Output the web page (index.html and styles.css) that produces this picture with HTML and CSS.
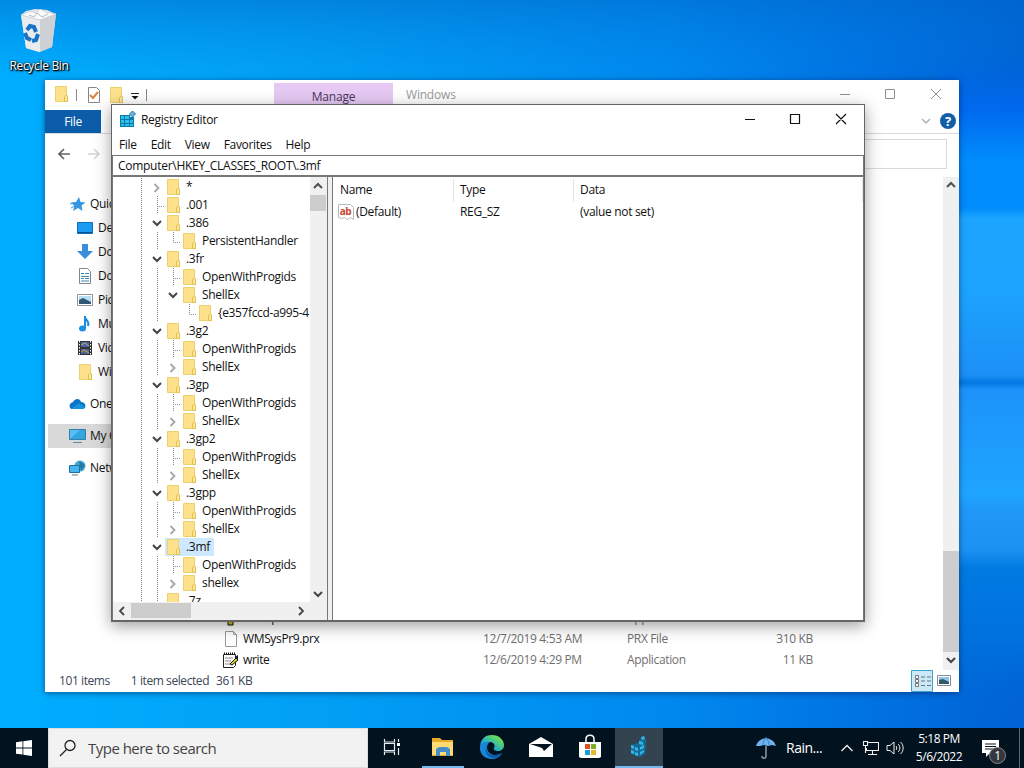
FILE: index.html
```
<!DOCTYPE html>
<html lang="en">
<head>
    <meta charset="UTF-8">
    <meta name="viewport" content="width=device-width, initial-scale=1.0">
    <title>Registry Editor</title>
    <link rel="stylesheet" href="styles.css">
</head>
<body>
    <!-- shared icons -->
    <svg class="defs" width="0" height="0">
        <defs>
            <symbol id="folder" viewBox="-1 0 16 16"><path d="M1.500.5h11v9l1 1v5h-12z" fill="#fde28b" stroke="#ecd06c"/><path d="M10.500 15.500v-5l2-1.500 1 1v5.500z" fill="#fbe79b" stroke="#e3c04c"/></symbol>
            <symbol id="down" viewBox="1 0 16 16"><path d="M5 6l4 4 4-4" fill="none" stroke="#444" stroke-width="2"/></symbol>
            <symbol id="up" viewBox="0 0 16 16"><path d="M4 10l4-4 4 4" fill="none" stroke="#505050" stroke-width="2"/></symbol>
            <symbol id="right" viewBox="1 0 16 16"><path d="M6.500 5l4 4-4 4" fill="none" stroke="#a6a6a6" stroke-width="1.800"/></symbol>
        </defs>
    </svg>

    <div class="desktop">
        <svg class="wallpaper" width="1024" height="728" viewBox="0 0 1024 728">
            <defs>
                <linearGradient id="base" x1="0" y1="0" x2="1" y2="0">
                    <stop offset="0" stop-color="#00aeff"/><stop offset=".3" stop-color="#02a0f5"/>
                    <stop offset=".65" stop-color="#0089ef"/><stop offset=".85" stop-color="#0072e2"/><stop offset="1" stop-color="#0062d4"/>
                </linearGradient>
                <linearGradient id="top" x1="0" y1="0" x2="0" y2="1">
                    <stop offset="0" stop-color="#0068c8" stop-opacity=".5"/><stop offset="1" stop-color="#0080e0" stop-opacity="0"/>
                </linearGradient>
                <linearGradient id="beam" gradientUnits="userSpaceOnUse" x1="0" y1="0" x2="0" y2="728">
                    <stop offset=".08" stop-color="#0066e6" stop-opacity="0"/>
                    <stop offset=".15" stop-color="#0069ee"/>
                    <stop offset=".22" stop-color="#008cfc"/>
                    <stop offset=".285" stop-color="#008cfa"/>
                    <stop offset=".3" stop-color="#1ca5ff"/>
                    <stop offset=".4" stop-color="#1ca3ff"/>
                    <stop offset=".515" stop-color="#1c90f5"/>
                    <stop offset=".526" stop-color="#0078e2"/>
                    <stop offset=".535" stop-color="#1d93fa"/>
                    <stop offset=".68" stop-color="#1ea5ff"/>
                    <stop offset=".7" stop-color="#2098f8"/>
                    <stop offset=".755" stop-color="#1c92f2"/>
                    <stop offset=".78" stop-color="#007be2"/>
                    <stop offset=".88" stop-color="#0071df"/>
                    <stop offset=".98" stop-color="#0068d8" stop-opacity="0"/>
                </linearGradient>
            </defs>
            <rect width="1024" height="728" fill="url(#base)"/>
            <rect width="1024" height="80" fill="url(#top)"/>
            <rect x="940" width="84" height="728" fill="url(#beam)"/>
        </svg>

        <div class="shortcut">
            <svg width="40" height="46" viewBox="0 0 40 46">
                <path d="M2 6l5-4 9-2 12 1 9 4-4 33-13 5-13-4z" fill="#e3e5e8"/>
                <path d="M2 6l19 5v32L7 39z" fill="#e9ebed"/><path d="M21 11l16-6-4 33-12 5z" fill="#cdd1d5"/>
                <path d="M2 6l9-4 6 2 4-4 6 3 10 2-16 6z" fill="#fafafa" stroke="#c4cace" stroke-width=".8"/>
                <path d="M10 6l5 2 3-4 5 4 6-3" fill="none" stroke="#b6bcc0"/>
                <g fill="none" stroke="#1873c4" stroke-width="4"><path d="M8 21l3-4 4 1 2 5"/><path d="M6 24l2 5 4 2"/><path d="M19 25l-2 6-4 1"/></g>
            </svg>
            <span>Recycle Bin</span>
        </div>

        <div class="window explorer">
            <div class="quickbar">
                <svg class="qfolder" width="16" height="16"><use href="#folder"/></svg>
                <span class="divider"></span>
                <svg class="qcheck" width="14" height="17" viewBox="0 0 14 17"><path d="M1.500.5h8l3 3v12h-11z" fill="#fff" stroke="#868686"/><path d="M3 8l3 3 5-6" fill="none" stroke="#d58445" stroke-width="2"/></svg>
                <svg class="qfolder2" width="16" height="16"><use href="#folder"/></svg>
                <svg class="qdown" width="8" height="8" viewBox="0 0 8 8"><path d="M0 .5h8" stroke="#222"/><path d="M.5 3h7L4 6.500z" fill="#111"/></svg>
                <span class="divider last"></span>
                <span class="manage">Manage</span>
                <span class="wintitle">Windows</span>
                <svg class="controls" width="138" height="28" viewBox="0 0 138 28"><path d="M18 13.500h10M63.500 8.500h9v9h-9zM109 8l10 10M119 8l-10 10" fill="none" stroke="#8e8e8e"/></svg>
            </div>
            <div class="ribbon">
                <span class="filetab">File</span>
                <svg width="40" height="22" viewBox="0 0 40 22"><path d="M3 9l4 4 4-4" fill="none" stroke="#b0b0b0" stroke-width="1.500"/><circle cx="29" cy="11" r="8" fill="#125ea8"/><text x="29" y="15.500" text-anchor="middle" class="help">?</text></svg>
            </div>
            <div class="addressrow">
                <svg width="50" height="16" viewBox="0 0 50 16"><path d="M12 7H1M6 2L1 7l5 5" fill="none" stroke="#626262" stroke-width="1.600"/><path d="M30 7h11M36 2l5 5-5 5" fill="none" stroke="#d2d2d2" stroke-width="1.600"/></svg>
                <span class="searchbox"></span>
            </div>
            <div class="exbody">
                <div class="nav">
                    <div class="navrow root"><svg width="16" height="16" viewBox="0 0 16 16"><path d="M9 1l1.500 5 5 .500-4 3 1 5.500-4.500-3L3 15l1.500-5L1 6.500l5-.5z" fill="#3296e0"/><path d="M0 8l4-1M1 12l4-2" stroke="#3296e0"/></svg>Quick access</div>
                    <div class="navrow"><svg width="16" height="16" viewBox="0 0 16 16"><path d="M.5 2.500h15v11H.5z" fill="#1c9bf2" stroke="#0c6ebc"/><path d="M1 12.500h14" stroke="#075391"/></svg>Desktop</div>
                    <div class="navrow"><svg width="16" height="16" viewBox="0 0 16 16"><path d="M5 0h6v7h5l-8 8-8-8h5z" fill="#3c8ddc"/></svg>Downloads</div>
                    <div class="navrow"><svg width="16" height="16" viewBox="0 0 16 16"><path d="M2.500.5h8l3 3v12h-11z" fill="#fff" stroke="#7d8790"/><path d="M4 5.500h3M8 5.500h4M4 8.500h8M4 10.500h3M8 10.500h4M4 13h8" stroke="#3c87b6"/></svg>Documents</div>
                    <div class="navrow"><svg width="16" height="16" viewBox="0 0 16 16"><path d="M.5 2.500h15v11H.5z" fill="#fff" stroke="#8d969d"/><path d="M2 4h12v8H2z" fill="#b8ddf5"/><path d="M2 8l4-2 8 4v2H2z" fill="#2f5975"/></svg>Pictures</div>
                    <div class="navrow"><svg width="16" height="16" viewBox="0 0 16 16"><path d="M8 0v12M8 1c0 3 5 4 3 9" stroke="#158cdf" stroke-width="2" fill="none"/><ellipse cx="5.500" cy="12.500" rx="3.500" ry="3" fill="#1993e6"/></svg>Music</div>
                    <div class="navrow"><svg width="16" height="16" viewBox="0 0 16 16"><path d="M1 1h14v14H1z" fill="#333"/><path d="M2.500 1v14M13.500 1v14" stroke="#fff" stroke-dasharray="1.500 1.500"/><path d="M4 2h8v5H4z" fill="#4269ad"/><path d="M4 9h8v5H4z" fill="#4d6699"/><path d="M4 5l4-2 4 3M4 12l3-2 5 3" stroke="#d5a24d" fill="none"/></svg>Videos</div>
                    <div class="navrow"><svg width="16" height="16"><use href="#folder"/></svg>Windows</div>
                    <div class="navrow root spaced"><svg width="17" height="16" viewBox="0 0 17 16"><path d="M2 13a4 4 0 012-7c2-4 7-4 8 0 5 0 6 6 2 7z" fill="#0a75c5"/><path d="M2 13L10 7l6 4-2 2z" fill="#1693df"/></svg>OneDrive</div>
                    <div class="navrow root spaced selected"><svg width="17" height="16" viewBox="0 0 17 16"><path d="M.5 1.500h16v10H.5z" fill="#59bdf3" stroke="#337fab"/><path d="M1 11L11 2h5v9z" fill="#36a4df"/><path d="M4 14.500h9" stroke="#608ba5"/></svg>My Computer</div>
                    <div class="navrow root spaced"><svg width="17" height="16" viewBox="0 0 17 16"><circle cx="11" cy="6" r="5.500" fill="#44a8ce"/><path d="M10 1l6 4-4 6" fill="#2177a8"/><path d="M.5 5.500h10v7H.5z" fill="#46b6ee" stroke="#21719f"/><path d="M3 15h6" stroke="#547c90"/></svg>Network</div>
                </div>
                <div class="files">
                    <div class="filerow"><svg width="16" height="16" viewBox="0 0 16 16"><path d="M2 1h10v10H2z" fill="#ddd"/><path d="M6 11h5v4H6z" fill="#d2c71a" stroke="#111"/></svg><span>winhlp32</span><span>12/7/2019 4:10 AM</span><span>Application</span><span>12 KB</span></div>
                    <div class="filerow"><svg width="16" height="16" viewBox="0 0 16 16"><path d="M3.500.5h8l3 3v12h-11z" fill="#fff" stroke="#9a9a9a"/><path d="M11.500.5v3h3" fill="none" stroke="#9a9a9a"/></svg><span>WMSysPr9.prx</span><span>12/7/2019 4:53 AM</span><span>PRX File</span><span>310 KB</span></div>
                    <div class="filerow"><svg width="17" height="16" viewBox="0 0 17 16"><path d="M1.500 2.500h12v11l-2 2h-10z" fill="#fff" stroke="#222"/><path d="M2 1.500h12" stroke="#111" stroke-width="2" stroke-dasharray="1 1"/><path d="M3 6h8M3 9h6M3 12h5" stroke="#888"/><path d="M8 12l6-6 2 2-6 5z" fill="#d8d32a" stroke="#111"/><path d="M13 5l3-2v5z" fill="#113"/></svg><span>write</span><span>12/6/2019 4:29 PM</span><span>Application</span><span>11 KB</span></div>
                </div>
                <div class="vscroll exscroll">
                    <svg width="16" height="16"><use href="#up"/></svg>
                    <span class="thumb"></span>
                    <svg width="16" height="16"><use href="#down"/></svg>
                </div>
            </div>
            <div class="status">
                <span>101 items</span><span>1 item selected</span><span>361 KB</span>
                <svg width="44" height="22" viewBox="0 0 44 22"><path d="M.5.5h21v21H.5z" fill="#cbe8f6" stroke="#3da0c8"/><path d="M4.500 5.500h3v3h-3zM4.500 9.500h3v3h-3zM4.500 13.500h3v3h-3z" fill="#fff" stroke="#777"/><path d="M10 7h4M16 7h4M10 11h4M16 11h4M10 15.500h4M16 15.500h4" stroke="#62747e"/><path d="M26.500 5.500h13v10h-13z" fill="#fff" stroke="#858b91"/><path d="M28 7h10v7H28z" fill="#8ec4e8"/><path d="M28 10l4-1 6 3v2H28z" fill="#315a69"/></svg>
            </div>
        </div>

        <div class="window regedit">
            <div class="titlebar">
                <svg width="18" height="18" viewBox="0 0 18 18"><path d="M1 4h10v2h4v10H1z" fill="#087aa9"/><path d="M2 5h3v3H2zM6 5h4v3H6zM2 9h3v3H2zM6 9h4v3H6zM11 9h3v3h-3zM2 13h3v2H2zM6 13h4v2H6zM11 13h3v2h-3z" fill="#31bde7"/><path d="M13.500 0l3 3-3 3-3-3z" fill="#6cb3e2" stroke="#1d77af"/></svg>
                <span>Registry Editor</span>
                <svg class="controls" width="138" height="28" viewBox="0 0 138 28"><path d="M19 13.500h10M64.500 8.500h9v9h-9zM110 8l10 10M120 8l-10 10" fill="none" stroke="#111" stroke-width="1.200"/></svg>
            </div>
            <div class="menubar"><span>File</span><span>Edit</span><span>View</span><span>Favorites</span><span>Help</span></div>
            <div class="address">Computer\HKEY_CLASSES_ROOT\.3mf</div>
            <div class="panes">
                <div class="treepane">
                    <div class="treetop">
                        <div class="tree">
                            <div class="row"><i class="v"></i><svg><use href="#right"/></svg><svg><use href="#folder"/></svg><b>*</b></div>
                            <div class="row"><i class="v"></i><i class="t"></i><svg><use href="#folder"/></svg><b>.001</b></div>
                            <div class="row"><i class="v"></i><svg><use href="#down"/></svg><svg><use href="#folder"/></svg><b>.386</b></div>
                            <div class="row"><i class="v"></i><i class="v"></i><i class="e"></i><svg><use href="#folder"/></svg><b>PersistentHandler</b></div>
                            <div class="row"><i class="v"></i><svg><use href="#down"/></svg><svg><use href="#folder"/></svg><b>.3fr</b></div>
                            <div class="row"><i class="v"></i><i class="v"></i><i class="t"></i><svg><use href="#folder"/></svg><b>OpenWithProgids</b></div>
                            <div class="row"><i class="v"></i><i class="v"></i><svg><use href="#down"/></svg><svg><use href="#folder"/></svg><b>ShellEx</b></div>
                            <div class="row"><i class="v"></i><i class="v"></i><i></i><i class="e"></i><svg><use href="#folder"/></svg><b class="guid">{e357fccd-a995-4</b></div>
                            <div class="row"><i class="v"></i><svg><use href="#down"/></svg><svg><use href="#folder"/></svg><b>.3g2</b></div>
                            <div class="row"><i class="v"></i><i class="v"></i><i class="t"></i><svg><use href="#folder"/></svg><b>OpenWithProgids</b></div>
                            <div class="row"><i class="v"></i><i class="v"></i><svg><use href="#right"/></svg><svg><use href="#folder"/></svg><b>ShellEx</b></div>
                            <div class="row"><i class="v"></i><svg><use href="#down"/></svg><svg><use href="#folder"/></svg><b>.3gp</b></div>
                            <div class="row"><i class="v"></i><i class="v"></i><i class="t"></i><svg><use href="#folder"/></svg><b>OpenWithProgids</b></div>
                            <div class="row"><i class="v"></i><i class="v"></i><svg><use href="#right"/></svg><svg><use href="#folder"/></svg><b>ShellEx</b></div>
                            <div class="row"><i class="v"></i><svg><use href="#down"/></svg><svg><use href="#folder"/></svg><b>.3gp2</b></div>
                            <div class="row"><i class="v"></i><i class="v"></i><i class="t"></i><svg><use href="#folder"/></svg><b>OpenWithProgids</b></div>
                            <div class="row"><i class="v"></i><i class="v"></i><svg><use href="#right"/></svg><svg><use href="#folder"/></svg><b>ShellEx</b></div>
                            <div class="row"><i class="v"></i><svg><use href="#down"/></svg><svg><use href="#folder"/></svg><b>.3gpp</b></div>
                            <div class="row"><i class="v"></i><i class="v"></i><i class="t"></i><svg><use href="#folder"/></svg><b>OpenWithProgids</b></div>
                            <div class="row"><i class="v"></i><i class="v"></i><svg><use href="#right"/></svg><svg><use href="#folder"/></svg><b>ShellEx</b></div>
                            <div class="row current"><i class="v"></i><svg><use href="#down"/></svg><svg><use href="#folder"/></svg><b>.3mf</b></div>
                            <div class="row"><i class="v"></i><i class="v"></i><i class="t"></i><svg><use href="#folder"/></svg><b>OpenWithProgids</b></div>
                            <div class="row"><i class="v"></i><i class="v"></i><svg><use href="#right"/></svg><svg><use href="#folder"/></svg><b>shellex</b></div>
                            <div class="row"><i class="v"></i><i class="t"></i><svg><use href="#folder"/></svg><b>.7z</b></div>
                        </div>
                        <div class="vscroll">
                            <svg width="16" height="16"><use href="#up"/></svg>
                            <span class="thumb"></span>
                            <svg width="16" height="16"><use href="#down"/></svg>
                        </div>
                    </div>
                    <div class="hscroll">
                        <svg width="18" height="16" viewBox="0 0 18 16"><path d="M11 4L7 8l4 4" fill="none" stroke="#444" stroke-width="1.800"/></svg>
                        <span class="hthumb"></span>
                        <svg width="16" height="16" viewBox="0 0 16 16"><path d="M6 4l4 4-4 4" fill="none" stroke="#444" stroke-width="1.800"/></svg>
                    </div>
                </div>
                <div class="values">
                    <div class="vhead"><span>Name</span><span>Type</span><span>Data</span></div>
                    <div class="vrow">
                        <span><svg width="16" height="16" viewBox="0 0 16 16"><path d="M.5.5h12l3 3v12l-3-2-3 2-3-2-3 1-3-1z" fill="#fff" stroke="#b5bab5"/><text x="7.500" y="10.500" text-anchor="middle" class="ab">ab</text></svg>(Default)</span>
                        <span>REG_SZ</span><span>(value not set)</span>
                    </div>
                </div>
            </div>
        </div>
    </div>

    <div class="taskbar">
        <div class="start"><svg width="16" height="16" viewBox="0 0 16 16"><path d="M0 2.300L6.500 1.300v6.200H0zM7.300 1.200L16 0v7.500H7.300zM0 8.400h6.500v6.200L0 13.700zM7.300 8.400H16V16l-8.700-1.200z" fill="#fff"/></svg></div>
        <div class="search"><svg width="18" height="18" viewBox="0 0 18 18"><circle cx="11" cy="6.500" r="5" fill="none" stroke="#222" stroke-width="1.300"/><path d="M7.500 10.500L1 17" stroke="#222" stroke-width="1.300"/></svg>Type here to search</div>
        <div class="apps">
            <div class="app taskview"><svg width="18" height="18" viewBox="0 0 18 18"><path d="M1.500 1v3h10V1M1.500 17v-3h10v3M1.500 5.500h10v7h-10zM15.500 1v3M15.500 10v7" fill="none" stroke="#e9eef2" stroke-width="1.200"/><path d="M14 5h3v3h-3z" fill="#fff"/></svg></div>
            <div class="app open"><svg width="24" height="22" viewBox="0 0 24 22"><path d="M1 2h8l2 2h11v16H1z" fill="#e8aa2c"/><path d="M1 6h21v13H1z" fill="#ffdb72"/><path d="M5 20v-7l3-2h8l3 2v7h-4v-4H9v4z" fill="#458dcb"/></svg></div>
            <div class="app"><svg width="26" height="26" viewBox="0 0 26 26">
                <defs><linearGradient id="edge" x1="0" y1="1" x2="1" y2="0"><stop offset=".3" stop-color="#16a3da"/><stop offset=".8" stop-color="#6bde56"/></linearGradient></defs>
                <path d="M1 12C2 4 7 1 13 1c7 0 12 5 12 10 0 4-3 6-6 6-3 0-5-1-4-3 2-3-1-6-4-6C7 8 3 9 1 12z" fill="url(#edge)"/>
                <path d="M1 12c2-4 7-5 10-4-4 2-5 12 5 13 3 0 5-1 7-2-2 4-6 6-10 6C5 25 0 19 1 12z" fill="#1786d8"/>
                <path d="M11 8c-5 2-6 14 5 13 3 0 5-1 7-2-3 4-6 5-9 5-8-1-10-12-3-16z" fill="#0d59a7"/></svg></div>
            <div class="app"><svg width="26" height="22" viewBox="0 0 26 22"><path d="M1 8l12-7 12 7v13H1z" fill="#fff"/><path d="M2 8h22l-8 7-2-3z" fill="#07141d"/></svg></div>
            <div class="app"><svg width="24" height="26" viewBox="0 0 24 26"><path d="M8 8V5c0-5 8-5 8 0v3" fill="none" stroke="#fff" stroke-width="1.500"/><path d="M1 8h22v15l-2 1H3l-2-1z" fill="#fff"/><path d="M7 10h5v5H7z" fill="#d8512d"/><path d="M13 10h5v5h-5z" fill="#7fad27"/><path d="M7 16h5v5H7z" fill="#189bd6"/><path d="M13 16h5v5h-5z" fill="#e9b72a"/></svg></div>
            <div class="app active"><svg width="22" height="24" viewBox="0 0 22 24"><path d="M3 10l7-2 2-4 4-2 2 3-1 14-5 3-9-3z" fill="#136b96"/><path d="M3 10l3 1v3l-3-1zM7 12l3 1v3l-3-1zM3 15l3 1v3l-3-1zM7 17l3 1v3l-3-1zM12 12l4-2v3l-4 2zM12 17l4-2v2l-4 3zM11 6l4 1v3l-4-1zM13 2l3-1 1 3-3 1z" fill="#35b6e6"/></svg></div>
        </div>
        <div class="tray">
            <svg width="22" height="24" viewBox="0 0 22 24"><path d="M1 10C3 4 7 3 11 2c4 1 8 2 10 8l-4-1-4 1-4-1-4 1z" fill="#6fb2ed"/><path d="M11 1v2M8 9c0-3 1-5 3-7 2 2 3 4 3 7" stroke="#3b82c7" fill="none"/><path d="M11 10v10c0 3-4 3-4 0" fill="none" stroke="#84949e" stroke-width="1.600"/></svg>
            <span class="weather">Rain...</span>
            <svg class="caret" width="14" height="10" viewBox="0 0 14 10"><path d="M1.500 8L7 2.500 12.500 8" fill="none" stroke="#eee" stroke-width="1.300"/></svg>
            <svg class="net" width="17" height="16" viewBox="0 0 17 16"><path d="M5.500 2.500h11v8h-12V8M10.500 11v3M6 14.500h9M1.500 1.500h4v4h-4zM3.500 6v7" fill="none" stroke="#eee" stroke-width="1.100"/></svg>
            <svg class="sound" width="18" height="16" viewBox="0 0 18 16"><path d="M1 5.500h3l4-3.500v12l-4-3.500H1zM10 6c1 1 1 3 0 4M12 4c2.500 2 2.500 6 0 8M14.500 2c3.500 3 3.500 9 0 12" fill="none" stroke="#eee"/></svg>
            <div class="clock"><span>5:18 PM</span><span>5/6/2022</span></div>
            <div class="notify"><svg width="17" height="17" viewBox="0 0 17 17"><path d="M0 0h17v13H8l-4 4v-4H0z" fill="#fff"/><path d="M3 4h11M3 6.500h11M3 9h8" stroke="#07141d"/></svg><span class="badge">1</span></div>
            <span class="showdesk"></span>
        </div>
    </div>
</body>
</html>
```

FILE: styles.css
```
* { box-sizing: border-box; }
body {
    margin: 0;
    width: 1024px;
    height: 768px;
    overflow: hidden;
    display: flex;
    flex-direction: column;
    font-family: "Open Sans", "Noto Sans", sans-serif;
    font-size: 12px;
    letter-spacing: -0.32px;
    color: #111;
    line-height: 18px;
    white-space: nowrap;
}
svg { display: block; flex: none; }
.defs { position: absolute; }
.desktop {
    position: relative;
    height: 728px;
    flex: none;
    overflow: hidden;
}
.shortcut {
    position: absolute;
    left: 0;
    top: 9px;
    width: 78px;
    display: flex;
    flex-direction: column;
    align-items: center;
    gap: 2px;
    color: white;
    text-shadow: 1px 1px 1px #000, 1px 1px 2px #000, 0 0 2px #000;
}
.window {
    position: absolute;
    display: flex;
    flex-direction: column;
    background: white;
}

/* file explorer */
.explorer {
    left: 45px;
    top: 80px;
    width: 914px;
    height: 612px;
    box-shadow: 0 1px 6px rgba(0,30,80,0.6);
}
.quickbar {
    display: flex;
    align-items: center;
    height: 30px;
    padding-left: 8px;
}
.divider {
    width: 1px;
    height: 12px;
    background: #888;
    margin: 0 10px 0 7px;
}
.divider.last { margin: 0 127px 0 7px; }
.qfolder { margin-bottom: 2px; }
.qfolder2 { margin-left: 7px; }
.qdown { margin: 3px 0 0 7px; }
.manage {
    width: 119px;
    height: 27px;
    align-self: flex-end;
    background: #e5c9f3;
    color: #4d355c;
    text-align: center;
    line-height: 28px;
    letter-spacing: -0.2px;
}
.wintitle { margin-left: 13px; color: #999; letter-spacing: -0.2px; }
.controls { margin-left: auto; }
.explorer .controls { margin-right: -1px; }
.ribbon {
    display: flex;
    justify-content: space-between;
    height: 24px;
    border-bottom: 1px solid #dadada;
}
.filetab {
    width: 56px;
    background: #0c5da9;
    color: white;
    text-align: center;
    line-height: 24px;
}
.help { font: bold 13px "Open Sans", sans-serif; fill: white; }
.addressrow {
    display: flex;
    align-items: center;
    justify-content: space-between;
    height: 43px;
    padding: 0 12px 2px 13px;
}
.searchbox {
    width: 250px;
    height: 30px;
    border: 1px solid #d9d9d9;
    margin-top: -2px;
}
.exbody {
    display: flex;
    height: 493px;
}
.nav {
    width: 177px;
    padding-top: 15px;
}
.navrow {
    display: flex;
    align-items: center;
    gap: 5px;
    height: 24px;
    padding-left: 32px;
}
.navrow.root { padding-left: 24px; gap: 4px; }
.navrow.root:first-child { padding-left: 25px; }
.navrow.spaced { margin-top: 8px; }
.navrow.selected { background: #d9d9d9; margin-left: 3px; padding-left: 21px; }
.files {
    flex: 1;
    display: flex;
    flex-direction: column;
    justify-content: flex-end;
}
.filerow {
    display: grid;
    grid-template-columns: 21px 240px 144px 120px 66px;
    align-items: center;
    height: 21px;
    color: #707070;
    letter-spacing: -0.36px;
}
.filerow span:nth-child(2) { color: #111; }
.filerow span:last-child { text-align: right; }
.vscroll {
    width: 17px;
    display: flex;
    flex-direction: column;
    background: #f0f0f0;
    padding-top: 1px;
}
.thumb { background: #cdcdcd; }
.exscroll { width: 16px; padding: 0 0 2px; }
.exscroll .thumb { height: 101px; margin-top: auto; }
.status {
    display: flex;
    align-items: center;
    height: 22px;
    padding: 0 4px 0 14px;
    color: #3b4656;
    letter-spacing: -0.42px;
}
.status span:nth-child(2) { margin-left: 21px; }
.status span:nth-child(3) { margin-left: 7px; }
.status svg { margin-left: auto; }

/* registry editor */
.regedit {
    left: 111px;
    top: 104px;
    width: 754px;
    height: 518px;
    border: 1px solid #666;
    border-bottom-width: 2px;
    box-shadow: 0 4px 15px rgba(0,0,0,0.38);
}
.titlebar {
    display: flex;
    align-items: center;
    gap: 4px;
    height: 30px;
    padding-left: 7px;
}
.titlebar span { letter-spacing: -0.3px; }
.menubar {
    display: flex;
    gap: 14px;
    height: 20px;
    padding-left: 7px;
    line-height: 20px;
}
.address {
    height: 22px;
    border: 1px solid #777;
    border-bottom-width: 2px;
    padding-left: 5px;
    line-height: 19px;
    letter-spacing: -0.28px;
}
.panes {
    display: flex;
    flex: 1;
    min-height: 0;
    background: #f0f0f0;
}
.treepane {
    width: 216px;
    border: solid #777;
    border-width: 0 1px;
    display: flex;
    flex-direction: column;
}
.treetop {
    display: flex;
    height: 425px;
}
.tree {
    flex: 1;
    min-width: 0;
    overflow: hidden;
    background: white;
    padding: 1px 0 0 20px;
}
.row {
    display: flex;
    align-items: center;
    height: 18px;
}
.row svg { width: 16px; height: 16px; }
.row b { font-weight: normal; padding-left: 5px; letter-spacing: -0.3px; }
.row .guid { letter-spacing: -0.36px; }
.row i {
    width: 16px;
    height: 18px;
    flex: none;
    background-repeat: no-repeat;
}
.v, .t, .e {
    background-image: repeating-linear-gradient(#888 0 1px, transparent 1px 2px), repeating-linear-gradient(90deg, #999 0 1px, transparent 1px 2px);
    background-size: 1px 18px, 0 1px;
    background-position: 8px 0, 8px 10px;
}
.t { background-size: 1px 18px, 8px 1px; }
.e { background-size: 1px 10px, 8px 1px; }
.current svg:nth-of-type(2) { background: #cde8ff; box-shadow: 0 -1px #cde8ff, 0 1px #cde8ff; }
.current b { background: #cde8ff; padding-right: 4px; }
.treetop .thumb { height: 16px; margin: 1px 1px auto 0; }
.hscroll {
    display: flex;
    align-items: center;
    height: 17px;
}
.hthumb {
    width: 60px;
    height: 15px;
    background: #cdcdcd;
    margin-right: 102px;
}
.values {
    flex: 1;
    margin-left: 4px;
    border: solid #777;
    border-width: 0 1px;
    background: white;
    padding-top: 2px;
}
.vhead, .vrow {
    display: grid;
    grid-template-columns: 121px 120px 1fr;
    align-items: center;
    height: 23px;
}
.vhead span {
    height: 23px;
    line-height: 22px;
    padding-left: 7px;
    border-right: 1px solid #e5e5e5;
}
.vhead span:nth-child(2), .vhead span:nth-child(3) { padding-left: 6px; }
.vrow span { padding-left: 6px; display: flex; }
.vrow span:first-child { gap: 2px; align-items: center; padding-left: 5px; }
.vrow { height: 19px; }
.ab { font: bold 10px "Open Sans", sans-serif; fill: #c34732; }

/* taskbar */
.taskbar {
    display: flex;
    height: 40px;
    flex: none;
    background: #03121f;
    color: white;
}
.start {
    width: 48px;
    display: grid;
    place-items: center;
}
.search {
    width: 320px;
    display: flex;
    align-items: center;
    gap: 11px;
    padding-left: 10px;
    background: #f2f2f2;
    border: 1px solid #ddd;
    color: #444;
    font-size: 15px;
    letter-spacing: -0.52px;
}
.apps { display: flex; gap: 1px; }
.app {
    width: 48px;
    display: grid;
    place-items: center;
    border-bottom: 2px solid transparent;
}
.open {
    border-image: linear-gradient(90deg, transparent 4px, #76b9ed 4px 44px, transparent 44px) 1;
    border-width: 0 0 2px;
}
.taskview { width: 48px; margin-right: 2px; }
.active { background: #344350; border-color: #76b9ed; }
.tray {
    display: flex;
    align-items: center;
    flex: 1;
    padding-left: 92px;
}
.weather { margin-left: 9px; width: 46px; font-size: 14px; letter-spacing: -0.5px; }
.caret { margin-left: 8px; }
.net { margin-left: 8px; }
.sound { margin-left: 7px; }
.clock {
    display: flex;
    flex-direction: column;
    align-items: center;
    width: 58px;
    margin-left: 6px;
    letter-spacing: -0.45px;
}
.notify { position: relative; margin-left: 14px; }
.badge {
    position: absolute;
    left: 7px;
    top: 7px;
    width: 17px;
    height: 17px;
    border: 1px solid #888;
    border-radius: 50%;
    background: #34383e;
    text-align: center;
    line-height: 15px;
}
.showdesk {
    width: 1px;
    height: 40px;
    margin-left: auto;
    margin-right: 4px;
    background: #596672;
}
```
